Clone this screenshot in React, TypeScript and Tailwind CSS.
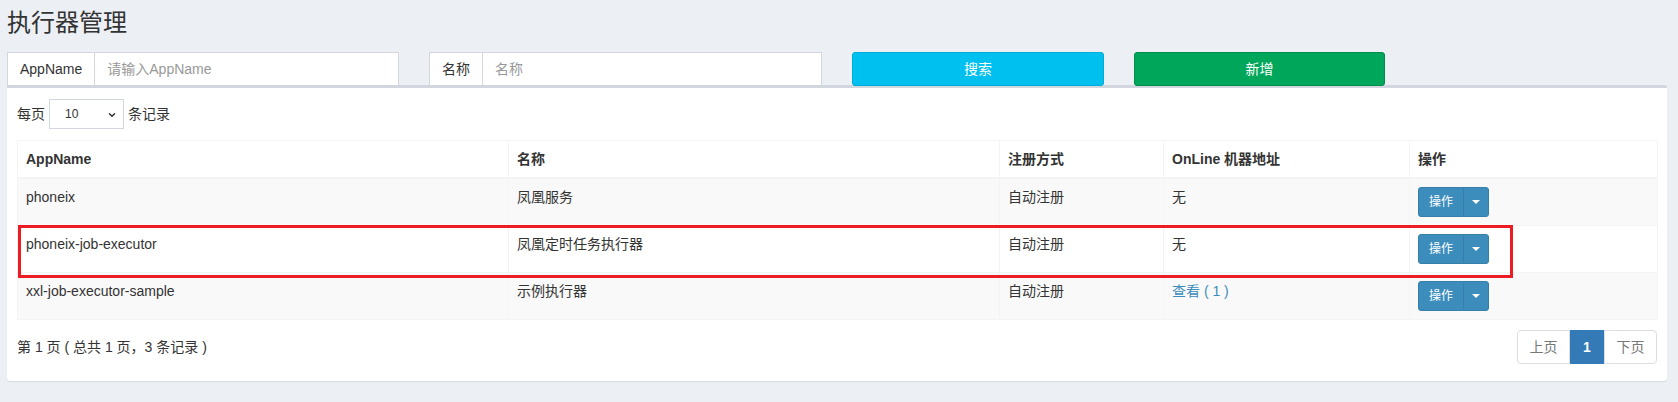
import { ChevronDown } from 'lucide-react';

const rows = [
  { app: 'phoneix', name: '凤凰服务', type: '自动注册', online: '无', link: false },
  { app: 'phoneix-job-executor', name: '凤凰定时任务执行器', type: '自动注册', online: '无', link: false },
  { app: 'xxl-job-executor-sample', name: '示例执行器', type: '自动注册', online: '查看 ( 1 )', link: true },
];

function InputGroup({ label, placeholder }: { label: string; placeholder: string }) {
  return (
    <div className="flex h-[34px] border border-[#d2d6de] bg-white">
      <span className="flex items-center px-[12px] border-r border-[#d2d6de] text-[#333]">{label}</span>
      <input
        className="flex-1 min-w-0 px-[12px] outline-none bg-white text-[#555] placeholder:text-[#999]"
        placeholder={placeholder}
      />
    </div>
  );
}

function ActionButton() {
  return (
    <div className="inline-flex h-[30px] align-top">
      <button className="px-[10px] h-[30px] text-[12px] text-white bg-[#3c8dbc] border border-[#367fa9] rounded-l-[3px]">
        操作
      </button>
      <button className="-ml-px w-[26px] h-[30px] flex items-center justify-center bg-[#3c8dbc] border border-[#367fa9] rounded-r-[3px]">
        <span className="w-0 h-0 border-x-[4px] border-x-transparent border-t-[4px] border-t-white" />
      </button>
    </div>
  );
}

export default function App() {
  return (
    <div className="min-h-screen bg-[#ecf0f5] pl-[7px] pr-[11px] pt-[10px] text-[14px] text-[#333] font-['Liberation_Sans','Noto_Sans_CJK_SC',sans-serif]">
      {/* Header */}
      <h1 className="text-[24px] leading-[26px] font-normal">执行器管理</h1>

      {/* Search bar */}
      <div className="mt-[16px] grid grid-cols-[392px_393px_252px_251px] gap-x-[30px]">
        <InputGroup label="AppName" placeholder="请输入AppName" />
        <InputGroup label="名称" placeholder="名称" />
        <button className="h-[34px] rounded-[3px] bg-[#00c0ef] border border-[#00acd6] text-white">搜索</button>
        <button className="h-[34px] rounded-[3px] bg-[#00a65a] border border-[#008d4c] text-white">新增</button>
      </div>

      {/* Box */}
      <div className="-mt-px bg-white border-t-[3px] border-[#d2d6de] rounded-[3px] shadow-[0_1px_1px_rgba(0,0,0,0.1)] px-[10px] pt-[10px] pb-[17px]">
        <div className="mt-[1px] flex items-center h-[30px] mb-[11px]">
          <span>每页</span>
          <div className="relative mx-[4px] w-[75px] h-[30px] border border-[#d2d6de] flex items-center pl-[15px] text-[12px]">
            10
            <ChevronDown className="absolute right-[6px] top-[10px] w-[10px] h-[10px] text-[#333]" strokeWidth={3.5} />
          </div>
          <span>条记录</span>
        </div>

        <div className="relative">
          <table className="w-[1640px] table-fixed border-collapse">
            <colgroup>
              <col className="w-[491px]" />
              <col className="w-[491px]" />
              <col className="w-[164px]" />
              <col className="w-[246px]" />
              <col className="w-[248px]" />
            </colgroup>
            <thead>
              <tr>
                {['AppName', '名称', '注册方式', 'OnLine 机器地址', '操作'].map((h) => (
                  <th
                    key={h}
                    className="border border-[#f4f4f4] border-b-2 p-[8px] text-left font-bold leading-[20px]"
                  >
                    {h}
                  </th>
                ))}
              </tr>
            </thead>
            <tbody>
              {rows.map((r, i) => (
                <tr key={r.app} className={i % 2 === 0 ? 'bg-[#f9f9f9]' : 'bg-white'}>
                  <td className="border border-[#f4f4f4] p-[8px] align-top leading-[20px]">{r.app}</td>
                  <td className="border border-[#f4f4f4] p-[8px] align-top leading-[20px]">{r.name}</td>
                  <td className="border border-[#f4f4f4] p-[8px] align-top leading-[20px]">{r.type}</td>
                  <td className="border border-[#f4f4f4] p-[8px] align-top leading-[20px]">
                    {r.link ? <a className="text-[#3c8dbc]">{r.online}</a> : r.online}
                  </td>
                  <td className="border border-[#f4f4f4] p-[8px] align-top leading-[20px] h-[47px]">
                    <ActionButton />
                  </td>
                </tr>
              ))}
            </tbody>
          </table>
          {/* highlight annotation */}
          <div className="pointer-events-none absolute left-[1px] top-[85px] w-[1495px] h-[53px] border-[3px] border-[#ed1c24]" />
        </div>

        <div className="mt-[10px] flex items-center justify-between">
          <span>第 1 页 ( 总共 1 页，3 条记录 )</span>
          <div className="flex h-[34px]">
            <span className="w-[53px] flex items-center justify-center border border-[#ddd] rounded-l-[4px] text-[#777]">上页</span>
            <span className="w-[34px] flex items-center justify-center bg-[#337ab7] border border-[#337ab7] text-white font-bold">1</span>
            <span className="w-[53px] flex items-center justify-center border border-[#ddd] rounded-r-[4px] text-[#777]">下页</span>
          </div>
        </div>
      </div>
    </div>
  );
}
